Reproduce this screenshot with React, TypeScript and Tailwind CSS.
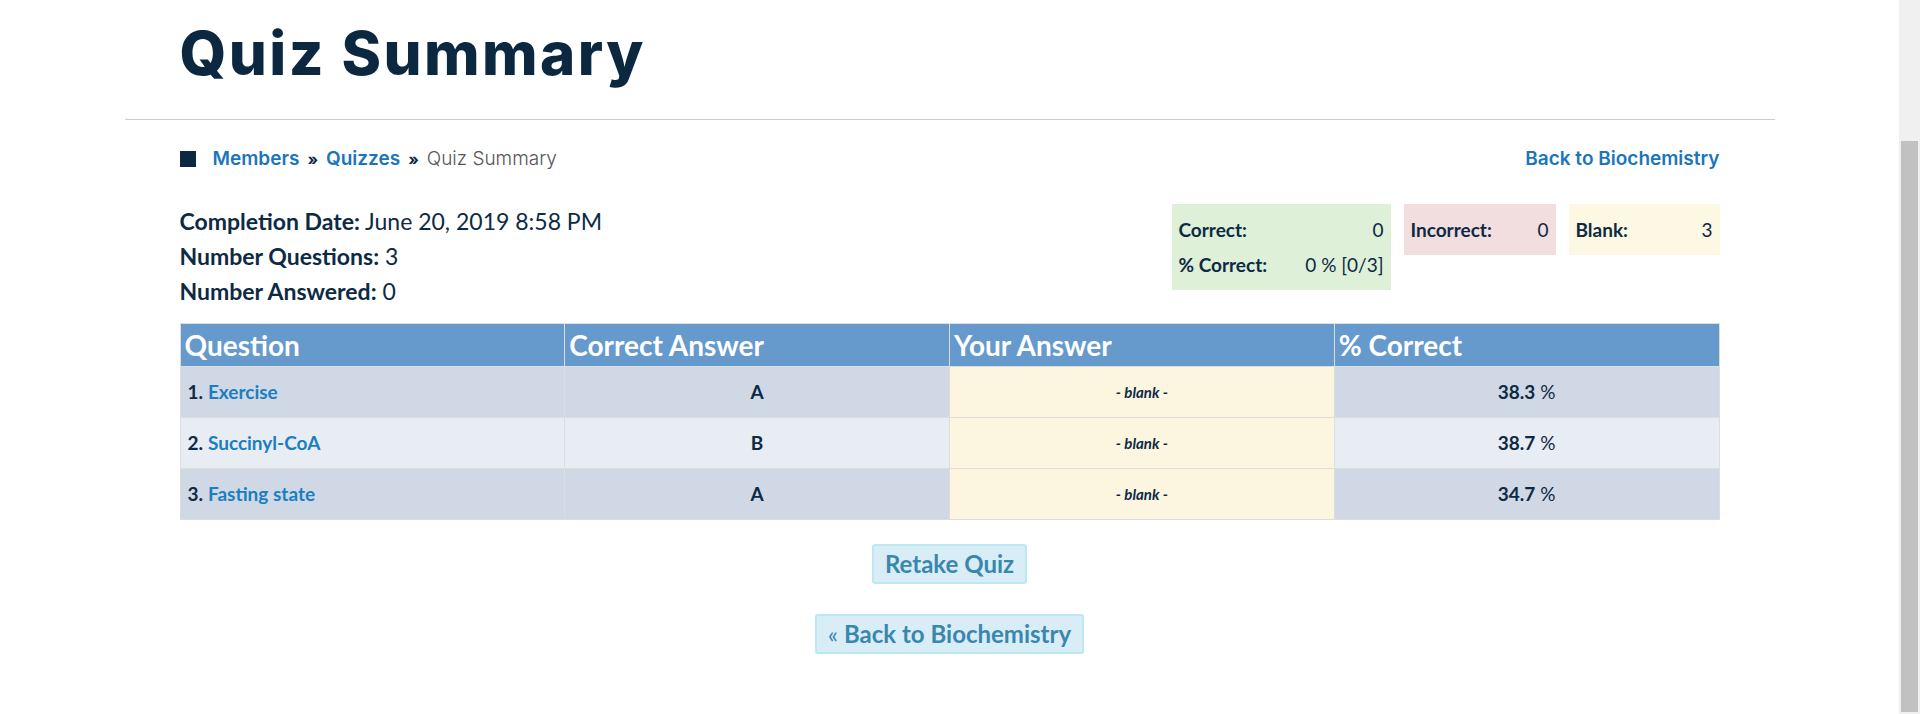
const rows = [
  { n: 1, title: 'Exercise', correct: 'A', pct: '38.3' },
  { n: 2, title: 'Succinyl-CoA', correct: 'B', pct: '38.7' },
  { n: 3, title: 'Fasting state', correct: 'A', pct: '34.7' },
]

export default function App() {
  return (
    <div className="flex h-[714px] w-full overflow-hidden bg-white">
      <div className="flex-1 font-['Lato',sans-serif] text-[#0d2a45]">
        <div className="mx-auto w-[1540px] pt-[23px]">
          <h1 className="font-['Inter',sans-serif] text-[60px] font-extrabold leading-[60px] tracking-[2.4px] text-[#0b2840]">
            Quiz Summary
          </h1>
        </div>
        <div className="mx-auto mt-[36px] w-[1650px] border-t border-[#cccccc]" />

        <div className="mx-auto w-[1540px]">
          {/* breadcrumb */}
          <div className="mt-[27px] flex h-[24px] items-center justify-between font-['Inter',sans-serif] text-[19px] leading-[24px]">
            <div className="flex items-center">
              <span className="mr-[17px] h-[16px] w-[16px] bg-[#0b2840]" />
              <a className="font-semibold text-[#1b75bc]">Members</a>
              <span className="mx-[8px] text-[16px] font-bold text-[#0b2840]">»</span>
              <a className="font-semibold text-[#1b75bc]">Quizzes</a>
              <span className="mx-[8px] text-[16px] font-bold text-[#0b2840]">»</span>
              <span className="font-light text-[#555555]">Quiz Summary</span>
            </div>
            <a className="font-semibold text-[#1b75bc]">Back to Biochemistry</a>
          </div>

          {/* summary */}
          <div className="mt-[33px] flex items-start justify-between">
            <div className="text-[23px] leading-[35px]">
              <div>
                <b>Completion Date:</b> June 20, 2019 8:58 PM
              </div>
              <div>
                <b>Number Questions:</b> 3
              </div>
              <div>
                <b>Number Answered:</b> 0
              </div>
            </div>
            <div className="flex items-start gap-[13px] text-[19px] leading-[35px]">
              <div className="w-[219px] bg-[#dff0d8] px-[7px] py-[8px]">
                <div className="flex justify-between">
                  <b>Correct:</b>
                  <span>0</span>
                </div>
                <div className="flex justify-between">
                  <b>% Correct:</b>
                  <span>0 % [0/3]</span>
                </div>
              </div>
              <div className="flex w-[152px] justify-between bg-[#f2dede] px-[7px] py-[8px]">
                <b>Incorrect:</b>
                <span>0</span>
              </div>
              <div className="flex w-[151px] justify-between bg-[#fcf8e3] px-[7px] py-[8px]">
                <b>Blank:</b>
                <span>3</span>
              </div>
            </div>
          </div>

          {/* table */}
          <table className="mt-[14px] w-full table-fixed border-collapse border border-[#dddddd]">
            <thead>
              <tr className="h-[43px] bg-[#6699cc] text-left text-[28px] font-bold text-white">
                <th className="border border-[#dddddd] px-[4px]">Question</th>
                <th className="border border-[#dddddd] px-[4px]">Correct Answer</th>
                <th className="border border-[#dddddd] px-[4px]">Your Answer</th>
                <th className="border border-[#dddddd] px-[4px]">% Correct</th>
              </tr>
            </thead>
            <tbody className="text-[19px]">
              {rows.map((r, i) => {
                const bg = i % 2 === 0 ? 'bg-[#d0d8e6]' : 'bg-[#e8ecf3]'
                return (
                  <tr key={r.n} className="h-[51px]">
                    <td className={`border border-[#dddddd] px-[7px] ${bg}`}>
                      <b>{r.n}.</b> <a className="font-bold text-[#1a7fc1]">{r.title}</a>
                    </td>
                    <td className={`border border-[#dddddd] text-center font-bold ${bg}`}>{r.correct}</td>
                    <td className="border border-[#dddddd] bg-[#fcf6e1] text-center text-[15px] font-bold italic">
                      - blank -
                    </td>
                    <td className={`border border-[#dddddd] text-center ${bg}`}>
                      <b>{r.pct}</b> %
                    </td>
                  </tr>
                )
              })}
            </tbody>
          </table>

          {/* buttons */}
          <div className="mt-[24px] flex flex-col items-center gap-[30px]">
            <button className="h-[40px] rounded-[3px] border-[2px] border-[#bce8f1] bg-[#d9edf7] px-[11px] text-[24px] font-bold text-[#3a87ad]">
              Retake Quiz
            </button>
            <button className="h-[40px] rounded-[3px] border-[2px] border-[#bce8f1] bg-[#d9edf7] px-[11px] text-[24px] font-bold text-[#3a87ad]">
              <span className="font-normal">«</span> Back to Biochemistry
            </button>
          </div>
        </div>
      </div>

      {/* scrollbar */}
      <div className="w-[21px] shrink-0 bg-[#f0f0f0] pl-[2px] pr-[2px] pt-[141px] pb-[2px]">
        <div className="h-full w-full bg-[#c1c1c1]" />
      </div>
    </div>
  )
}
